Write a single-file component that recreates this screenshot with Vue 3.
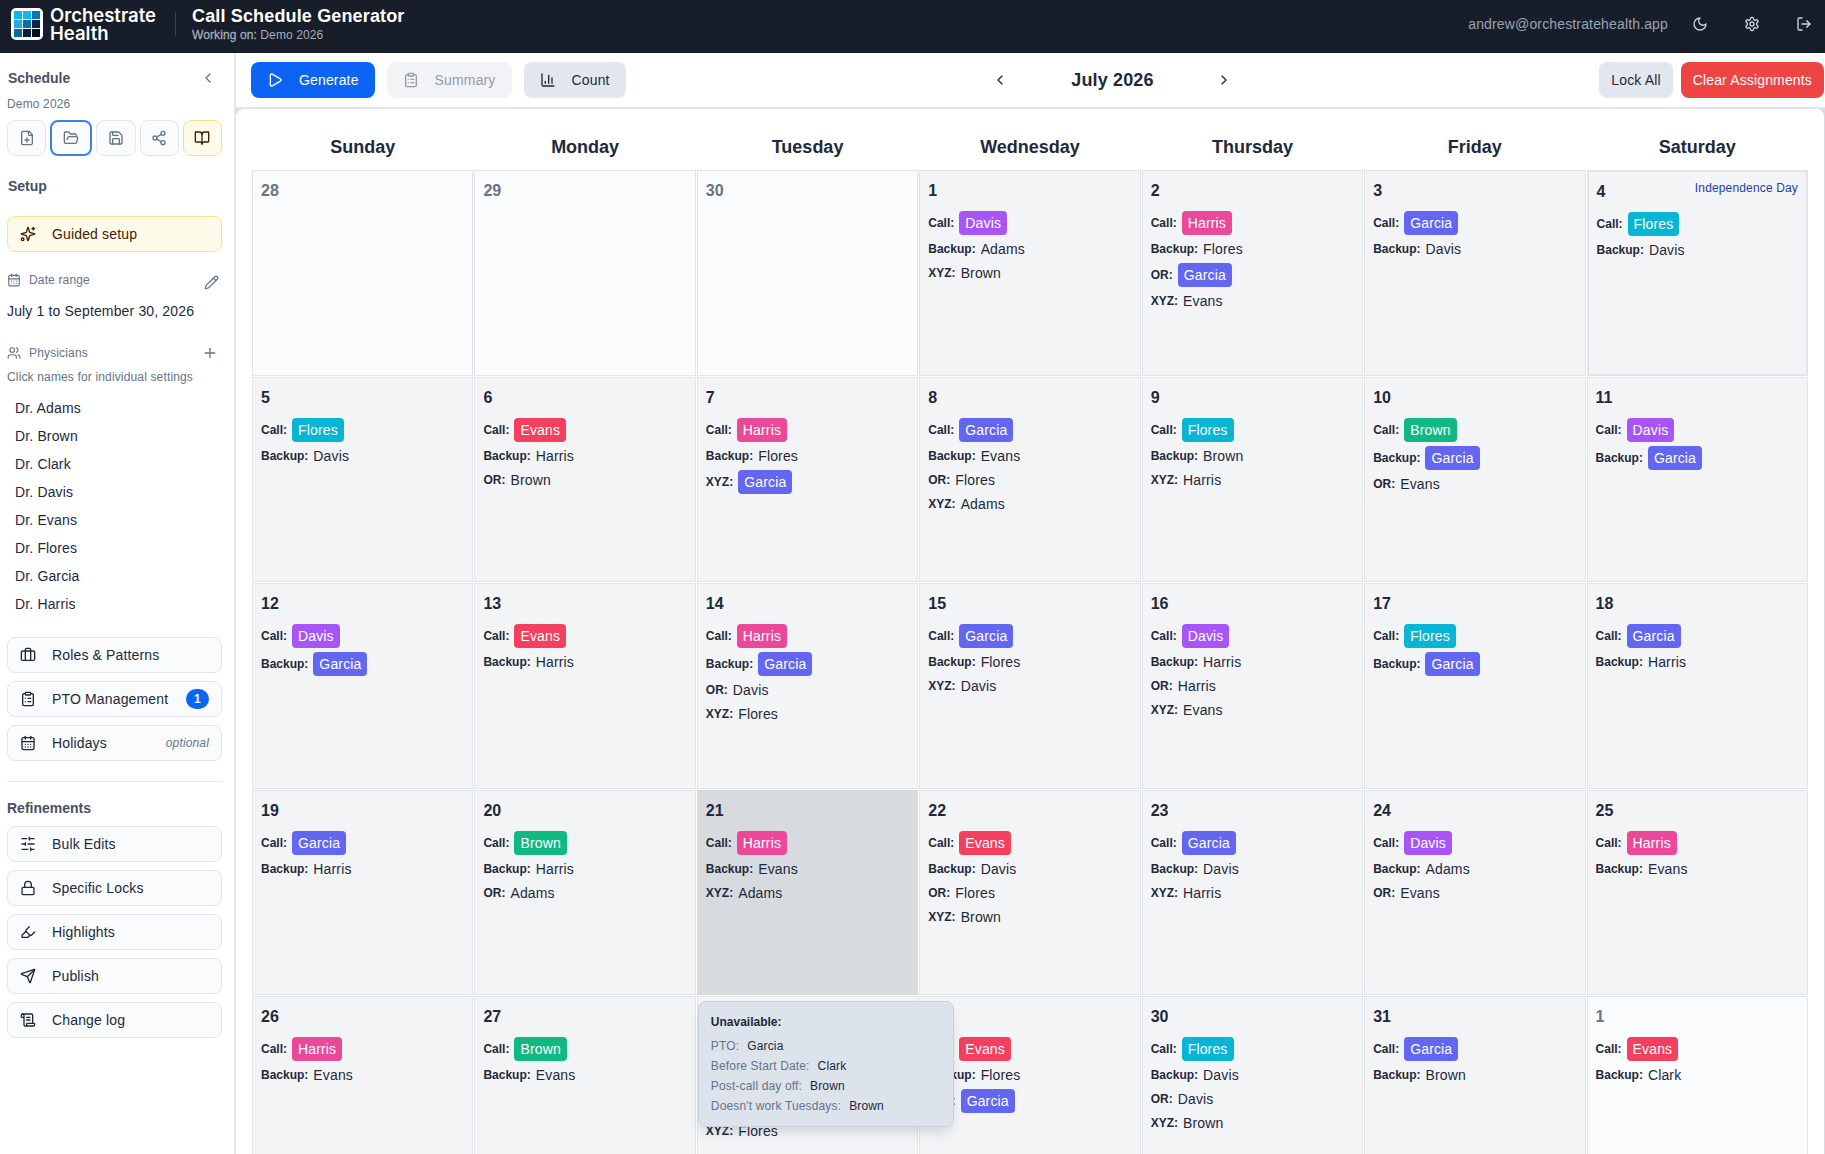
<template>
  <div class="app">
    <header class="header">
      <div class="brand">
        <div class="logo">
          <span v-for="color in logoColors" :key="color" :style="{ backgroundColor: color }"></span>
        </div>
        <div class="brand-name">Orchestrate<br />Health</div>
      </div>
      <div class="header-title">
        <h1>Call Schedule Generator</h1>
        <p><span class="working">Working on:</span> Demo 2026</p>
      </div>
      <div class="account">
        <span class="email">andrew@orchestratehealth.app</span>
        <button class="header-btn"><Icon name="moon" /></button>
        <button class="header-btn"><Icon name="settings" /></button>
        <button class="header-btn"><Icon name="logout" /></button>
      </div>
    </header>

    <div class="body">
      <aside class="sidebar">
        <div class="sidebar-head">
          <h2>Schedule</h2>
          <Icon name="chevronLeft" class="collapse" />
        </div>
        <p class="schedule-name">Demo 2026</p>
        <div class="file-actions">
          <button
            v-for="action in fileActions"
            :key="action.icon"
            class="file-btn"
            :class="action.variant"
          >
            <Icon :name="action.icon" />
          </button>
        </div>

        <h2 class="setup-title">Setup</h2>
        <button class="side-btn guided">
          <Icon name="sparkles" />
          <span>Guided setup</span>
        </button>

        <div class="field-head date-head">
          <Icon name="calendar" :size="14" />
          <span>Date range</span>
          <Icon name="pencil" :size="15" class="field-action pencil" />
        </div>
        <p class="date-range">July 1 to September 30, 2026</p>

        <div class="field-head">
          <Icon name="users" :size="14" />
          <span>Physicians</span>
          <Icon name="plus" class="field-action" />
        </div>
        <p class="hint">Click names for individual settings</p>
        <ul class="physicians">
          <li v-for="name in physicians" :key="name">Dr. {{ name }}</li>
        </ul>

        <div class="side-group">
          <button v-for="item in setupItems" :key="item.label" class="side-btn">
            <Icon :name="item.icon" />
            <span>{{ item.label }}</span>
            <span v-if="item.badge" class="badge">{{ item.badge }}</span>
            <em v-if="item.note">{{ item.note }}</em>
          </button>
        </div>

        <hr />

        <h2 class="refine-title">Refinements</h2>
        <div class="side-group">
          <button v-for="item in refinements" :key="item.label" class="side-btn">
            <Icon :name="item.icon" />
            <span>{{ item.label }}</span>
          </button>
        </div>
      </aside>

      <main class="main">
        <div class="toolbar">
          <div class="toolbar-group">
            <button class="btn primary"><Icon name="play" /><span>Generate</span></button>
            <button class="btn disabled"><Icon name="clipboard" /><span>Summary</span></button>
            <button class="btn"><Icon name="chart" /><span>Count</span></button>
          </div>
          <div class="month-nav">
            <button><Icon name="chevronLeft" /></button>
            <h2>July 2026</h2>
            <button><Icon name="chevronRight" /></button>
          </div>
          <div class="toolbar-group right">
            <button class="btn compact">Lock All</button>
            <button class="btn compact danger">Clear Assignments</button>
          </div>
        </div>

        <div class="calendar-wrap">
          <div class="calendar">
            <div class="weekdays">
              <div v-for="day in weekdays" :key="day">{{ day }}</div>
            </div>
            <div class="grid">
              <div
                v-for="(cell, index) in cells"
                :key="index"
                class="cell"
                :class="{ outside: cell.outside, holiday: cell.holiday, hovered: cell.hovered }"
              >
                <div class="cell-head">
                  <span class="day-number">{{ cell.day }}</span>
                  <span v-if="cell.holiday" class="holiday-name">{{ cell.holiday }}</span>
                </div>
                <div class="assignments">
                  <div v-for="a in cell.assignments" :key="a.role" class="assignment">
                    <span class="role">{{ a.role }}:</span>
                    <span :class="a.pill ? ['pill', a.name.toLowerCase()] : 'name'">{{ a.name }}</span>
                  </div>
                </div>
                <div v-if="cell.hovered" class="tooltip">
                  <strong>Unavailable:</strong>
                  <div v-for="row in unavailable" :key="row.reason" class="tooltip-row">
                    <span class="reason">{{ row.reason }}:</span>
                    <span>{{ row.name }}</span>
                  </div>
                </div>
              </div>
            </div>
          </div>
        </div>
      </main>
    </div>
  </div>
</template>

<script setup>
import { h } from 'vue'

const circle = (x, y, r) => `M${x - r} ${y}a${r} ${r} 0 1 0 ${r * 2} 0a${r} ${r} 0 1 0 ${-r * 2} 0`
const rect = (x, y, w, ht, r) =>
  `M${x + r} ${y}h${w - 2 * r}a${r} ${r} 0 0 1 ${r} ${r}v${ht - 2 * r}a${r} ${r} 0 0 1 ${-r} ${r}h${2 * r - w}a${r} ${r} 0 0 1 ${-r} ${-r}v${2 * r - ht}a${r} ${r} 0 0 1 ${r} ${-r}z`

const icons = {
  moon: ['M12 3a6 6 0 0 0 9 9 9 9 0 1 1-9-9Z'],
  settings: [
    'M12.22 2h-.44a2 2 0 0 0-2 2v.18a2 2 0 0 1-1 1.73l-.43.25a2 2 0 0 1-2 0l-.15-.08a2 2 0 0 0-2.73.73l-.22.38a2 2 0 0 0 .73 2.73l.15.1a2 2 0 0 1 1 1.72v.51a2 2 0 0 1-1 1.74l-.15.09a2 2 0 0 0-.73 2.73l.22.38a2 2 0 0 0 2.73.73l.15-.08a2 2 0 0 1 2 0l.43.25a2 2 0 0 1 1 1.73V20a2 2 0 0 0 2 2h.44a2 2 0 0 0 2-2v-.18a2 2 0 0 1 1-1.73l.43-.25a2 2 0 0 1 2 0l.15.08a2 2 0 0 0 2.73-.73l.22-.39a2 2 0 0 0-.73-2.73l-.15-.08a2 2 0 0 1-1-1.74v-.5a2 2 0 0 1 1-1.74l.15-.09a2 2 0 0 0 .73-2.73l-.22-.38a2 2 0 0 0-2.73-.73l-.15.08a2 2 0 0 1-2 0l-.43-.25a2 2 0 0 1-1-1.73V4a2 2 0 0 0-2-2z',
    circle(12, 12, 3)
  ],
  logout: ['m16 17 5-5-5-5', 'M21 12H9', 'M9 21H5a2 2 0 0 1-2-2V5a2 2 0 0 1 2-2h4'],
  chevronLeft: ['m15 18-6-6 6-6'],
  chevronRight: ['m9 18 6-6-6-6'],
  filePlus: [
    'M15 2H6a2 2 0 0 0-2 2v16a2 2 0 0 0 2 2h12a2 2 0 0 0 2-2V7Z',
    'M14 2v4a2 2 0 0 0 2 2h4',
    'M9 15h6',
    'M12 18v-6'
  ],
  folderOpen: [
    'm6 14 1.5-2.9A2 2 0 0 1 9.24 10H20a2 2 0 0 1 1.94 2.5l-1.54 6a2 2 0 0 1-1.95 1.5H4a2 2 0 0 1-2-2V5a2 2 0 0 1 2-2h3.9a2 2 0 0 1 1.69.9l.81 1.2a2 2 0 0 0 1.67.9H18a2 2 0 0 1 2 2v2'
  ],
  save: [
    'M15.2 3a2 2 0 0 1 1.4.6l3.8 3.8a2 2 0 0 1 .6 1.4V19a2 2 0 0 1-2 2H5a2 2 0 0 1-2-2V5a2 2 0 0 1 2-2z',
    'M17 21v-7a1 1 0 0 0-1-1H8a1 1 0 0 0-1 1v7',
    'M7 3v4a1 1 0 0 0 1 1h7'
  ],
  share: [circle(18, 5, 3), circle(6, 12, 3), circle(18, 19, 3), 'M8.59 13.51l6.83 3.98', 'M15.41 6.51l-6.82 3.98'],
  book: [
    'M12 7v14',
    'M3 18a1 1 0 0 1-1-1V4a1 1 0 0 1 1-1h5a4 4 0 0 1 4 4 4 4 0 0 1 4-4h5a1 1 0 0 1 1 1v13a1 1 0 0 1-1 1h-6a3 3 0 0 0-3 3 3 3 0 0 0-3-3z'
  ],
  sparkles: [
    'M9.937 15.5A2 2 0 0 0 8.5 14.063l-6.135-1.582a.5.5 0 0 1 0-.962L8.5 9.936A2 2 0 0 0 9.937 8.5l1.582-6.135a.5.5 0 0 1 .963 0L14.063 8.5A2 2 0 0 0 15.5 9.937l6.135 1.581a.5.5 0 0 1 0 .964L15.5 14.063a2 2 0 0 0-1.437 1.437l-1.582 6.135a.5.5 0 0 1-.963 0z',
    'M20 2v4',
    'M22 4h-4',
    circle(4, 20, 2)
  ],
  calendar: [
    'M8 2v4',
    'M16 2v4',
    rect(3, 4, 18, 18, 2),
    'M3 10h18',
    'M8 14h.01',
    'M12 14h.01',
    'M16 14h.01',
    'M8 18h.01',
    'M12 18h.01',
    'M16 18h.01'
  ],
  pencil: [
    'M21.174 6.812a1 1 0 0 0-3.986-3.987L3.842 16.174a2 2 0 0 0-.5.83l-1.321 4.352a.5.5 0 0 0 .623.622l4.353-1.32a2 2 0 0 0 .83-.497z',
    'm15 5 4 4'
  ],
  users: [
    'M16 21v-2a4 4 0 0 0-4-4H6a4 4 0 0 0-4 4v2',
    'M16 3.128a4 4 0 0 1 0 7.744',
    'M22 21v-2a4 4 0 0 0-3-3.87',
    circle(9, 7, 4)
  ],
  plus: ['M5 12h14', 'M12 5v14'],
  briefcase: ['M16 20V4a2 2 0 0 0-2-2h-4a2 2 0 0 0-2 2v16', rect(2, 6, 20, 14, 2)],
  clipboard: [
    rect(8, 2, 8, 4, 1),
    'M16 4h2a2 2 0 0 1 2 2v14a2 2 0 0 1-2 2H6a2 2 0 0 1-2-2V6a2 2 0 0 1 2-2h2',
    'M12 11h4',
    'M12 16h4',
    'M8 11h.01',
    'M8 16h.01'
  ],
  sliders: ['M21 4h-7', 'M10 4H3', 'M21 12h-9', 'M8 12H3', 'M21 20h-5', 'M12 20H3', 'M14 2v4', 'M8 10v4', 'M16 18v4'],
  lock: [rect(3, 11, 18, 11, 2), 'M7 11V7a5 5 0 0 1 10 0v4'],
  highlighter: ['m9 11-6 6v3h9l3-3', 'm22 12-4.6 4.6a2 2 0 0 1-2.8 0l-5.2-5.2a2 2 0 0 1 0-2.8L14 4'],
  send: [
    'M14.536 21.686a.5.5 0 0 0 .937-.024l6.5-19a.496.496 0 0 0-.635-.635l-19 6.5a.5.5 0 0 0-.024.937l7.93 3.18a2 2 0 0 1 1.112 1.11z',
    'm21.854 2.147-10.94 10.939'
  ],
  scroll: [
    'M15 12h-5',
    'M15 8h-5',
    'M19 17V5a2 2 0 0 0-2-2H4',
    'M8 21h12a2 2 0 0 0 2-2v-1a1 1 0 0 0-1-1H11a1 1 0 0 0-1 1v1a2 2 0 1 1-4 0V5a2 2 0 1 0-4 0v2a1 1 0 0 0 1 1h3'
  ],
  play: ['M5 5a2 2 0 0 1 3.008-1.728l11.997 6.998a2 2 0 0 1 .003 3.458l-12 7A2 2 0 0 1 5 19z'],
  chart: ['M3 3v16a2 2 0 0 0 2 2h16', 'M18 17V9', 'M13 17V5', 'M8 17v-3']
}

const Icon = (props) =>
  h(
    'svg',
    {
      width: props.size,
      height: props.size,
      viewBox: '0 0 24 24',
      fill: 'none',
      stroke: 'currentColor',
      'stroke-width': 2,
      'stroke-linecap': 'round',
      'stroke-linejoin': 'round'
    },
    icons[props.name].map((d) => h('path', { d }))
  )
Icon.props = { name: String, size: { type: Number, default: 16 } }

const logoColors = [
  '#0cb5f0', '#10b9f2', '#0679b4',
  '#27a9e6', '#0870ae', '#06234f',
  '#0569a5', '#071d40', '#050f24'
]

const fileActions = [
  { icon: 'filePlus' },
  { icon: 'folderOpen', variant: 'active' },
  { icon: 'save' },
  { icon: 'share' },
  { icon: 'book', variant: 'help' }
]

const physicians = ['Adams', 'Brown', 'Clark', 'Davis', 'Evans', 'Flores', 'Garcia', 'Harris']

const setupItems = [
  { icon: 'briefcase', label: 'Roles & Patterns' },
  { icon: 'clipboard', label: 'PTO Management', badge: 1 },
  { icon: 'calendar', label: 'Holidays', note: 'optional' }
]

const refinements = [
  { icon: 'sliders', label: 'Bulk Edits' },
  { icon: 'lock', label: 'Specific Locks' },
  { icon: 'highlighter', label: 'Highlights' },
  { icon: 'send', label: 'Publish' },
  { icon: 'scroll', label: 'Change log' }
]

const weekdays = ['Sunday', 'Monday', 'Tuesday', 'Wednesday', 'Thursday', 'Friday', 'Saturday']

const unavailable = [
  { reason: 'PTO', name: 'Garcia' },
  { reason: 'Before Start Date', name: 'Clark' },
  { reason: 'Post-call day off', name: 'Brown' },
  { reason: "Doesn't work Tuesdays", name: 'Brown' }
]

// A leading * marks a name that is shown as a colored pill
const schedule = [
  'Call:*Davis Backup:Adams XYZ:Brown',
  'Call:*Harris Backup:Flores OR:*Garcia XYZ:Evans',
  'Call:*Garcia Backup:Davis',
  'Call:*Flores Backup:Davis',
  'Call:*Flores Backup:Davis',
  'Call:*Evans Backup:Harris OR:Brown',
  'Call:*Harris Backup:Flores XYZ:*Garcia',
  'Call:*Garcia Backup:Evans OR:Flores XYZ:Adams',
  'Call:*Flores Backup:Brown XYZ:Harris',
  'Call:*Brown Backup:*Garcia OR:Evans',
  'Call:*Davis Backup:*Garcia',
  'Call:*Davis Backup:*Garcia',
  'Call:*Evans Backup:Harris',
  'Call:*Harris Backup:*Garcia OR:Davis XYZ:Flores',
  'Call:*Garcia Backup:Flores XYZ:Davis',
  'Call:*Davis Backup:Harris OR:Harris XYZ:Evans',
  'Call:*Flores Backup:*Garcia',
  'Call:*Garcia Backup:Harris',
  'Call:*Garcia Backup:Harris',
  'Call:*Brown Backup:Harris OR:Adams',
  'Call:*Harris Backup:Evans XYZ:Adams',
  'Call:*Evans Backup:Davis OR:Flores XYZ:Brown',
  'Call:*Garcia Backup:Davis XYZ:Harris',
  'Call:*Davis Backup:Adams OR:Evans',
  'Call:*Harris Backup:Evans',
  'Call:*Harris Backup:Evans',
  'Call:*Brown Backup:Evans',
  'Call:*Davis Backup:*Garcia OR:*Harris XYZ:Flores',
  'Call:*Evans Backup:Flores XYZ:*Garcia',
  'Call:*Flores Backup:Davis OR:Davis XYZ:Brown',
  'Call:*Garcia Backup:Brown'
]

const parse = (line) =>
  line.split(' ').map((part) => {
    const [role, name] = part.split(':')
    return { role, name: name.replace('*', ''), pill: name.startsWith('*') }
  })

const cells = [
  ...[28, 29, 30].map((day) => ({ day, outside: true, assignments: [] })),
  ...schedule.map((line, i) => ({
    day: i + 1,
    assignments: parse(line),
    holiday: i === 3 ? 'Independence Day' : '',
    hovered: i === 20
  })),
  { day: 1, outside: true, assignments: parse('Call:*Evans Backup:Clark') }
]
</script>

<style>
body {
  margin: 0;
  overflow: hidden;
}
</style>

<style scoped>
.app {
  height: 100vh;
  display: flex;
  flex-direction: column;
  overflow: hidden;
  background: #fff;
  color: #1e293b;
  font-family: 'Liberation Sans', Arial, sans-serif;
  font-size: 14px;
  line-height: 20px;
  letter-spacing: 0.15px;
}

.app * {
  box-sizing: border-box;
}

h1,
h2,
p,
ul {
  margin: 0;
  padding: 0;
}

button {
  font: inherit;
  letter-spacing: inherit;
  color: inherit;
  border: none;
  background: none;
  padding: 0;
}

svg {
  display: block;
  flex: none;
}

.header {
  flex: none;
  height: 53px;
  display: flex;
  align-items: flex-start;
  background: #171d29;
  color: #fff;
}

.brand {
  display: flex;
  align-items: center;
  gap: 7px;
  width: 176px;
  height: 24px;
  margin-top: 12px;
  padding-left: 11px;
  border-right: 1px solid #3b4351;
}

.logo {
  width: 32px;
  height: 32px;
  padding: 3px;
  display: grid;
  grid-template-columns: repeat(3, 1fr);
  gap: 1px;
  background: #fff;
  border-radius: 5px;
}

.brand-name {
  font-family: Inter, sans-serif;
  font-size: 18.5px;
  font-weight: 600;
  line-height: 18px;
  letter-spacing: 0;
}

.header-title {
  margin: 4px 0 0 16px;
}

.header-title h1 {
  font-size: 18px;
  line-height: 24px;
  font-weight: 700;
}

.header-title p {
  font-size: 12px;
  line-height: 14px;
  letter-spacing: 0.1px;
  color: #a3adbb;
}

.working {
  -webkit-text-stroke: 0.3px currentColor;
}

.account {
  margin-left: auto;
  margin-top: 6px;
  padding-right: 3px;
  display: flex;
  align-items: center;
  gap: 16px;
}

.email {
  color: #9aa4b2;
  margin-right: -2px;
}

.header-btn {
  width: 36px;
  height: 36px;
  display: grid;
  place-items: center;
  color: #cbd5e1;
}

.body {
  flex: 1;
  min-height: 0;
  display: flex;
}

.sidebar {
  flex: none;
  width: 236px;
  padding: 15px 12px 0 7px;
  border-right: 2px solid #e2e6ea;
}

.sidebar h2 {
  font-size: 14px;
  line-height: 20px;
  font-weight: 700;
  letter-spacing: 0;
  color: #475063;
  padding-left: 1px;
}

.sidebar-head {
  display: flex;
  align-items: center;
  justify-content: space-between;
}

.collapse {
  margin-right: 6px;
  color: #64748b;
}

.schedule-name {
  margin-top: 8px;
  font-size: 12px;
  line-height: 16px;
  color: #64748b;
}

.file-actions {
  display: flex;
  gap: 4px;
  margin-top: 8px;
}

.file-btn {
  flex: 1;
  height: 36px;
  display: grid;
  place-items: center;
  background: #f9fbfd;
  border: 1px solid #e2e6ea;
  border-radius: 8px;
  color: #64748b;
}

.file-btn.active {
  flex: none;
  width: 42px;
  border: 2px solid #3f7fe8;
}

.file-btn.help {
  background: #fffbeb;
  border-color: #f8e08a;
  color: #451a03;
}

.sidebar .setup-title {
  margin: 20px 0;
}

.side-btn {
  width: 100%;
  height: 36px;
  display: flex;
  align-items: center;
  gap: 16px;
  padding: 0 12px;
  background: #f9fbfd;
  border: 1px solid #e2e6ea;
  border-radius: 8px;
  text-align: left;
  white-space: nowrap;
  color: #1e293b;
}

.guided {
  background: #fffbeb;
  border-color: #f8e28c;
  color: #451a03;
}

.field-head {
  display: flex;
  align-items: center;
  gap: 8px;
  height: 24px;
  font-size: 12px;
  color: #64748b;
}

.date-head {
  margin-top: 16px;
}

.field-action {
  margin-left: auto;
  margin-right: 4px;
}

.pencil {
  margin-top: 5px;
  margin-right: 3px;
}

.date-range {
  margin: 9px 0 20px;
}

.hint {
  margin-top: 4px;
  font-size: 12px;
  line-height: 16px;
  color: #64748b;
}

.physicians {
  list-style: none;
  margin: 9px 0 19px;
  padding-left: 8px;
}

.physicians li {
  line-height: 28px;
}

.side-group {
  display: flex;
  flex-direction: column;
  gap: 8px;
}

.badge {
  margin-left: auto;
  width: 23px;
  height: 20px;
  border-radius: 10px;
  background: #0b64f4;
  color: #fff;
  font-size: 12px;
  font-weight: 700;
  text-align: center;
}

.side-btn em {
  margin-left: auto;
  font-size: 12px;
  color: #64748b;
}

hr {
  height: 1px;
  margin: 20px 0 16px;
  border: none;
  background: #e2e6ea;
}

.sidebar .refine-title {
  padding-left: 0;
  margin-bottom: 8px;
}

.main {
  flex: 1;
  min-width: 0;
  display: flex;
  flex-direction: column;
}

.toolbar {
  flex: none;
  height: 56px;
  display: flex;
  align-items: flex-start;
  justify-content: space-between;
  padding: 9px 1px 0 15px;
  border-bottom: 2px solid #e2e6ea;
}

.toolbar-group {
  display: flex;
  gap: 12px;
}

.toolbar-group.right {
  gap: 8px;
}

.btn {
  height: 36px;
  display: flex;
  align-items: center;
  gap: 16px;
  padding: 0 16px;
  border-radius: 8px;
  background: #e2e7ef;
  color: #1e293b;
}

.btn.primary {
  background: #0b64f4;
  color: #fff;
}

.btn.disabled {
  background: #f1f3f6;
  color: #949ba6;
}

.btn.compact {
  padding: 0 12px;
}

.btn.danger {
  background: #ef4444;
  color: #fff;
}

.month-nav {
  display: flex;
  align-items: center;
}

.month-nav button {
  width: 36px;
  height: 36px;
  display: grid;
  place-items: center;
}

.month-nav h2 {
  width: 188px;
  text-align: center;
  font-size: 18px;
  font-weight: 700;
}

.calendar-wrap {
  flex: 1;
  min-height: 0;
  padding-right: 1px;
  background: #d8dce2;
}

.calendar {
  height: 100%;
  padding: 17px 16px 0;
  background: #fff;
  border-radius: 8px 8px 0 0;
}

.weekdays {
  display: grid;
  grid-template-columns: repeat(7, 1fr);
  gap: 1px;
  height: 44px;
  line-height: 42px;
  text-align: center;
  font-size: 18px;
  font-weight: 700;
  letter-spacing: 0;
}

.grid {
  display: grid;
  grid-template-columns: repeat(7, minmax(0, 1fr));
  grid-auto-rows: 205.5px;
  gap: 1px;
}

.cell {
  position: relative;
  padding: 8px;
  background: #f2f4f6;
  border: 1px solid #e0e5ea;
}

.cell.outside {
  background: #f9fbfc;
}

.cell.holiday {
  border-width: 2px;
}

.cell.hovered {
  background: #d7dbe0;
  border-color: #d7dbe0;
}

.cell-head {
  display: flex;
  justify-content: space-between;
  height: 24px;
  margin-bottom: 8px;
}

.day-number {
  font-size: 16px;
  line-height: 24px;
  font-weight: 700;
  letter-spacing: 0;
}

.outside .day-number {
  color: #64748b;
}

.holiday-name {
  font-size: 12px;
  line-height: 16px;
  color: #1e40af;
}

.assignments {
  display: flex;
  flex-direction: column;
  gap: 4px;
}

.assignment {
  display: flex;
  align-items: center;
  gap: 5px;
}

.role {
  font-size: 12px;
  font-weight: 600;
  letter-spacing: 0;
}

.pill {
  padding: 2px 6px;
  border-radius: 4px;
  color: #fff;
}

.davis {
  background: #a855f7;
}

.harris {
  background: #ec4899;
}

.garcia {
  background: #6366f1;
}

.flores {
  background: #06b6d4;
}

.evans {
  background: #f43f5e;
}

.brown {
  background: #10b981;
}

.tooltip {
  position: absolute;
  z-index: 10;
  top: calc(100% + 7px);
  left: 0;
  width: 256px;
  height: 126px;
  padding: 10px 12px;
  background: #dce3ea;
  border: 1px solid #c9d1da;
  border-radius: 8px;
  box-shadow: 0 8px 14px -4px rgba(15, 23, 42, 0.16);
  font-size: 12px;
}

.tooltip strong {
  display: block;
  margin-bottom: 4px;
  line-height: 20px;
  letter-spacing: 0;
}

.tooltip-row {
  display: flex;
  gap: 8px;
}

.reason {
  color: #64748b;
}
</style>
